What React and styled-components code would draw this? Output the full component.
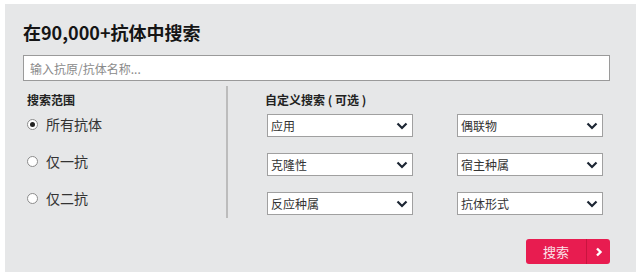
import styled, {createGlobalStyle} from "styled-components";

const Global = createGlobalStyle`
    body {
        margin: 0;
        background: #fff;
        font-family: "Liberation Sans", "Noto Sans CJK SC", sans-serif;
    }
`

const Panel = styled.div`
    margin: 4px 4px 0 5px;
    width: 631px;
    height: 268px;
    box-sizing: border-box;
    background: #e6e7e8;
    padding: 16px 26px 8px 18px;
    display: flex;
    flex-direction: column;
`

const Title = styled.h1`
    margin: 0;
    font-size: 18px;
    line-height: 24px;
    font-weight: bold;
    color: #151515;
    font-family: "Noto Sans CJK SC", sans-serif;
`

const SearchInput = styled.input`
    margin-top: 11px;
    height: 26px;
    box-sizing: border-box;
    width: 587px;
    border: 1px solid #9a9a9a;
    background: #fff;
    padding: 0 6px;
    font-size: 12px;
    font-family: "Noto Sans CJK SC", sans-serif;
    outline: none;

    &::placeholder {
        color: #8a8a8a;
    }
`

const Body = styled.div`
    margin-top: 5px;
    height: 132px;
    display: flex;
`

const LeftCol = styled.div`
    width: 203px;
    padding: 6px 0 0 4px;
    box-sizing: border-box;
`

const Divider = styled.div`
    width: 2px;
    background: #bcbcbc;
`

const RightCol = styled.div`
    flex: 1;
    padding: 6px 0 0 37px;
`

const Heading = styled.div`
    font-size: 12px;
    line-height: 16px;
    font-weight: bold;
    color: #222;
    font-family: "Noto Sans CJK SC", sans-serif;
`

const RadioList = styled.div`
    margin-top: 5px;
    display: flex;
    flex-direction: column;
    gap: 15px;
`

const RadioRow = styled.label`
    height: 22px;
    display: flex;
    align-items: center;
    gap: 8px;
    font-size: 14px;
    color: #333;
    font-family: "Noto Sans CJK SC", sans-serif;
`

const Circle = styled.span`
    width: 11px;
    height: 11px;
    box-sizing: border-box;
    border-radius: 50%;
    border: 1px solid #8c8c8c;
    background: #fff;
    display: flex;
    align-items: center;
    justify-content: center;

    &::after {
        content: "";
        width: 5px;
        height: 5px;
        border-radius: 50%;
        background: ${p => (p.$checked ? "#222" : "transparent")};
    }
`

const SelectGrid = styled.div`
    margin: 6px 0 0 2px;
    display: grid;
    grid-template-columns: 146px 146px;
    column-gap: 44px;
    row-gap: 16px;
`

const SelectBox = styled.div`
    height: 23px;
    box-sizing: border-box;
    border: 1px solid #a0a0a0;
    background: #fff;
    display: flex;
    align-items: center;
    justify-content: space-between;
    padding: 0 4px 0 3px;
    font-size: 12px;
    color: #333;
    font-family: "Noto Sans CJK SC", sans-serif;
`

const Footer = styled.div`
    margin-top: 21px;
    display: flex;
    justify-content: flex-end;
`

const Button = styled.button`
    width: 84px;
    height: 25px;
    border: 0;
    border-radius: 3px;
    padding: 0;
    background: #e81c50;
    display: flex;
    align-items: stretch;
    cursor: pointer;
`

const ButtonLabel = styled.span`
    flex: 1;
    display: flex;
    align-items: center;
    justify-content: center;
    font-size: 13px;
    color: #fbe3e9;
    font-family: "Noto Sans CJK SC", sans-serif;
`

const ButtonArrow = styled.span`
    width: 23px;
    border-left: 1px solid #c9143f;
    display: flex;
    align-items: center;
    justify-content: center;
`

const Chevron = () => (
    <svg width="12" height="8" viewBox="0 0 12 8">
        <path d="M1.5 1.5 L6 6 L10.5 1.5" fill="none" stroke="#1c2633" strokeWidth="2.2"/>
    </svg>
)

const scopes = [
    {label: "所有抗体", checked: true},
    {label: "仅一抗"},
    {label: "仅二抗"},
]

const filters = ["应用", "偶联物", "克隆性", "宿主种属", "反应种属", "抗体形式"]

const App = () => {
    return (
        <>
            <Global/>
            <Panel>
                <Title>在90,000+抗体中搜索</Title>
                <SearchInput placeholder="输入抗原/抗体名称..."/>
                <Body>
                    <LeftCol>
                        <Heading>搜索范围</Heading>
                        <RadioList>
                            {scopes.map(s => (
                                <RadioRow key={s.label}>
                                    <Circle $checked={s.checked}/>
                                    {s.label}
                                </RadioRow>
                            ))}
                        </RadioList>
                    </LeftCol>
                    <Divider/>
                    <RightCol>
                        <Heading>自定义搜索 ( 可选 )</Heading>
                        <SelectGrid>
                            {filters.map(f => (
                                <SelectBox key={f}>
                                    {f}
                                    <Chevron/>
                                </SelectBox>
                            ))}
                        </SelectGrid>
                    </RightCol>
                </Body>
                <Footer>
                    <Button>
                        <ButtonLabel>搜索</ButtonLabel>
                        <ButtonArrow>
                            <svg width="8" height="10" viewBox="0 0 8 10">
                                <path d="M2 1.5 L5.5 5 L2 8.5" fill="none" stroke="#fff" strokeWidth="2.4"/>
                            </svg>
                        </ButtonArrow>
                    </Button>
                </Footer>
            </Panel>
        </>
    )
}

export default App
